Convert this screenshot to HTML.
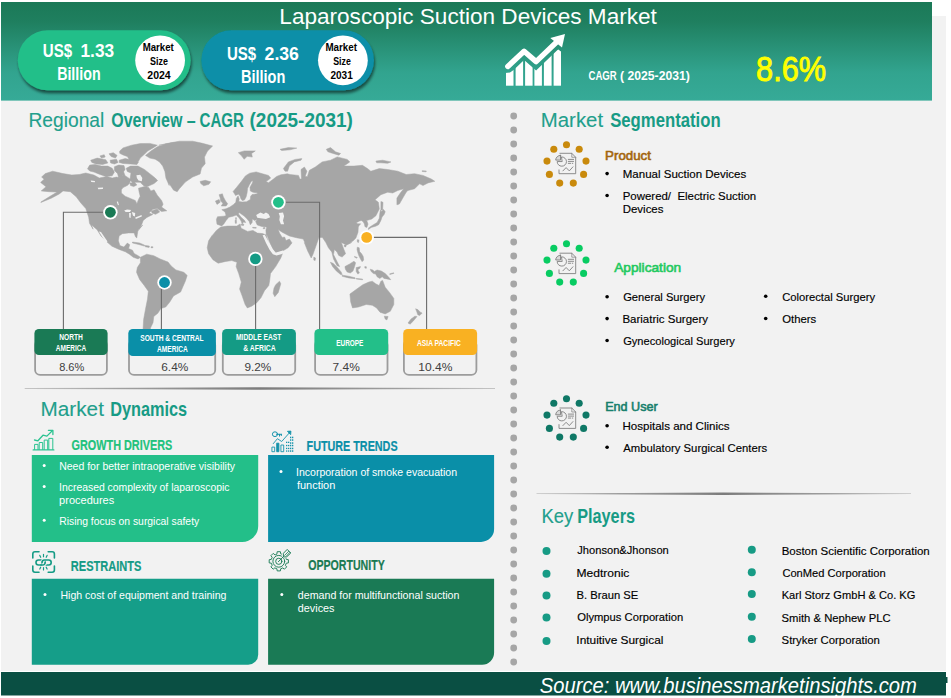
<!DOCTYPE html>
<html lang="en"><head><meta charset="utf-8"><title>Laparoscopic Suction Devices Market</title>
<style>html,body{margin:0;padding:0;background:#fff;overflow:hidden}svg{display:block}text{font-family:"Liberation Sans",Arial,sans-serif;white-space:pre}</style></head><body>
<svg width="951" height="698" viewBox="0 0 951 698">
<defs>
<linearGradient id="bn" x1="0" y1="0" x2="0" y2="1"><stop offset="0" stop-color="#1b7957"/><stop offset="0.2" stop-color="#1f7f5f"/><stop offset="0.72" stop-color="#32a48f"/><stop offset="1" stop-color="#36aa97"/></linearGradient>
<linearGradient id="dv" x1="0" y1="0" x2="1" y2="0"><stop offset="0" stop-color="#c4c4c4"/><stop offset="0.2" stop-color="#a0a0a0"/><stop offset="0.5" stop-color="#7c7c7c"/><stop offset="0.8" stop-color="#a0a0a0"/><stop offset="1" stop-color="#c4c4c4"/></linearGradient>
<filter id="sh" x="-10%" y="-20%" width="125%" height="150%"><feGaussianBlur in="SourceAlpha" stdDeviation="1.6"/><feOffset dx="1" dy="2.5"/><feComponentTransfer><feFuncA type="linear" slope="0.55"/></feComponentTransfer><feMerge><feMergeNode/><feMergeNode in="SourceGraphic"/></feMerge></filter>
</defs>
<rect x="0" y="0" width="951" height="698" fill="#fff"/>
<rect x="1" y="16" width="945" height="655" fill="#f2f2f2"/>
<rect x="1" y="2" width="931" height="98.6" fill="url(#bn)"/>
<rect x="1" y="672" width="945" height="23.5" fill="#0a4f43"/>
<rect x="945" y="677" width="2.5" height="6" fill="#0a4f43"/>
<text x="539.78" y="693" font-size="22" fill="#fff" font-style="italic" textLength="377.14" lengthAdjust="spacingAndGlyphs">Source: www.businessmarketinsights.com</text>
<text x="279.37" y="24" font-size="22" fill="#fff" textLength="377.44" lengthAdjust="spacingAndGlyphs">Laparoscopic Suction Devices Market</text>
<g filter="url(#sh)"><rect x="17.8" y="30.3" width="172.8" height="60" rx="30" fill="#23bf89"/></g>
<g filter="url(#sh)"><rect x="201.4" y="30.3" width="172.5" height="60" rx="30" fill="#0a8fa8"/></g>
<circle cx="160.1" cy="60.3" r="24.9" fill="#fff"/>
<circle cx="342.9" cy="60.3" r="24.9" fill="#fff"/>
<text x="42.76" y="56.6" font-size="18.6" fill="#fff" font-weight="bold" textLength="29.36" lengthAdjust="spacingAndGlyphs">US$</text>
<text x="80.50" y="56.6" font-size="18.6" fill="#fff" font-weight="bold" textLength="33.67" lengthAdjust="spacingAndGlyphs">1.33</text>
<text x="57.14" y="79.9" font-size="18.6" fill="#fff" font-weight="bold" textLength="43.52" lengthAdjust="spacingAndGlyphs">Billion</text>
<text x="226.96" y="60" font-size="18.6" fill="#fff" font-weight="bold" textLength="29.2" lengthAdjust="spacingAndGlyphs">US$</text>
<text x="264.58" y="60" font-size="18.6" fill="#fff" font-weight="bold" textLength="34.32" lengthAdjust="spacingAndGlyphs">2.36</text>
<text x="240.94" y="82.7" font-size="18.6" fill="#fff" font-weight="bold" textLength="44.42" lengthAdjust="spacingAndGlyphs">Billion</text>
<text x="142.69" y="50.9" font-size="11" fill="#000" font-weight="bold" textLength="31.15" lengthAdjust="spacingAndGlyphs">Market</text>
<text x="150.08" y="64.7" font-size="11" fill="#000" font-weight="bold" textLength="17.84" lengthAdjust="spacingAndGlyphs">Size</text>
<text x="147.30" y="78.6" font-size="11" fill="#000" font-weight="bold" textLength="23.42" lengthAdjust="spacingAndGlyphs">2024</text>
<text x="325.39" y="50.9" font-size="11" fill="#000" font-weight="bold" textLength="31.62" lengthAdjust="spacingAndGlyphs">Market</text>
<text x="333.18" y="64.7" font-size="11" fill="#000" font-weight="bold" textLength="17.6" lengthAdjust="spacingAndGlyphs">Size</text>
<text x="330.41" y="78.6" font-size="11" fill="#000" font-weight="bold" textLength="22.36" lengthAdjust="spacingAndGlyphs">2031</text>
<clipPath id="bc"><path d="M505 73L510 72.6L513.6 69.9L524.1 60.1L536.1 70.4L557.2 50.3L558.3 49.4L561.3 51.7V86H505Z"/></clipPath><g fill="#fff" clip-path="url(#bc)"><rect x="506" y="40" width="7.5" height="45.7"/><rect x="515.6" y="40" width="7.5" height="45.7"/><rect x="525.1" y="40" width="7.5" height="45.7"/><rect x="534.4" y="40" width="7.5" height="45.7"/><rect x="543.9" y="40" width="7.7" height="45.7"/><rect x="553.6" y="40" width="7.4" height="45.7"/></g><path d="M507.8 66.4L524.1 51.3L536.1 61.6L557.2 41.5" fill="none" stroke="#fff" stroke-width="5.4" stroke-linecap="round" stroke-linejoin="round"/><path d="M565 34L550.3 38L562 47.6Z" fill="#fff"/>
<text x="588.48" y="80" font-size="12.5" fill="#fff" font-weight="bold" textLength="28.22" lengthAdjust="spacingAndGlyphs">CAGR</text>
<text x="619.99" y="80" font-size="12.5" fill="#fff" font-weight="bold" textLength="69.92" lengthAdjust="spacingAndGlyphs">( 2025-2031)</text>
<text x="756.09" y="80.7" font-size="34.4" fill="#ffff00" stroke="#ffff00" stroke-width="0.9" textLength="70.03" lengthAdjust="spacingAndGlyphs">8.6%</text>
<text x="28.40" y="126.6" font-size="20.5" fill="#229f8c" stroke="#229f8c" stroke-width="0.12" textLength="75.95" lengthAdjust="spacingAndGlyphs">Regional</text>
<text x="111.19" y="126.6" font-size="20.5" fill="#179b85" font-weight="bold" textLength="84.49" lengthAdjust="spacingAndGlyphs">Overview –</text>
<text x="199.59" y="126.6" font-size="20.5" fill="#179b85" font-weight="bold" textLength="44.37" lengthAdjust="spacingAndGlyphs">CAGR</text>
<text x="249.54" y="126.6" font-size="20.5" fill="#179b85" font-weight="bold" textLength="103.42" lengthAdjust="spacingAndGlyphs">(2025-2031)</text>
<path d="M40.9 202.0 L49.7 196.5 L57.1 192.1 L49.0 191.7 L41.2 190.9 L46.0 186.8 L40.6 182.4 L44.1 179.2 L41.6 177.0 L45.3 173.6 L52.7 171.2 L63.0 173.6 L71.8 175.0 L79.2 174.5 L85.8 173.0 L93.9 175.0 L99.3 178.0 L106.9 176.4 L112.2 178.0 L116.5 177.1 L120.3 178.0 L122.4 175.3 L120.8 172.1 L123.5 171.5 L125.1 175.8 L127.8 177.4 L130.7 179.6 L129.6 183.3 L127.3 185.5 L123.0 187.6 L121.4 189.8 L121.4 193.0 L125.1 196.2 L131.6 198.9 L135.3 200.5 L136.9 203.7 L138.5 199.4 L140.2 196.2 L139.1 191.9 L138.5 188.2 L144.4 186.6 L148.7 187.6 L150.9 190.9 L154.1 189.8 L157.3 195.2 L161.6 200.5 L163.1 204.2 L161.6 207.1 L166.8 210.8 L161.6 211.5 L157.2 208.6 L152.8 209.3 L149.1 213.0 L152.8 214.5 L146.9 217.4 L143.2 220.4 L141.0 226.3 L138.0 230.7 L142.8 225.0 L138.1 229.7 L137.3 234.5 L136.8 237.9 L135.5 236.8 L134.1 232.9 L128.6 232.9 L122.3 233.7 L119.1 236.0 L118.4 240.8 L119.9 245.5 L123.9 247.1 L127.3 243.1 L129.7 244.7 L128.6 248.6 L132.5 250.2 L134.1 253.4 L138.1 255.7 L140.4 257.3 L138.1 258.9 L133.3 257.3 L129.4 254.2 L125.4 251.8 L119.1 249.4 L112.0 246.3 L106.5 241.6 L101.0 236.0 L97.1 229.7 L91.6 225.0 L93.1 229.2 L89.5 223.3 L88.7 217.4 L85.8 208.6 L80.6 202.7 L76.2 196.8 L70.3 191.7 L63.0 190.9 L59.3 193.9 L51.2 198.3 L40.9 202.4Z M119.7 151.1 L123.0 147.9 L131.6 145.2 L140.2 143.6 L149.8 143.4 L157.3 145.2 L153.0 147.9 L147.7 151.1 L144.4 154.3 L140.2 158.1 L138.5 161.3 L133.7 161.9 L129.4 159.7 L127.3 156.5 L123.0 154.9 L119.7 153.3Z M109.0 153.8 L113.3 152.7 L117.1 155.4 L115.4 158.1 L111.1 156.5Z M99.9 155.9 L104.2 154.7 L105.2 157.0 L101.5 158.1Z M90.7 160.2 L97.2 158.1 L105.8 159.7 L107.9 162.9 L102.6 164.5 L96.1 164.0 L91.8 162.4Z M87.5 168.8 L89.7 165.1 L95.0 164.5 L101.5 166.1 L107.9 166.1 L112.2 168.3 L114.4 172.1 L112.2 175.8 L105.8 176.4 L99.3 174.2 L94.0 172.1 L89.7 171.0Z M110.1 160.2 L116.5 159.2 L118.1 162.4 L114.4 164.0 L110.6 162.9Z M119.2 160.2 L125.1 158.6 L133.7 160.2 L138.5 161.9 L136.9 164.5 L130.5 164.0 L123.0 163.5 L119.2 162.4Z M114.4 166.7 L118.7 165.1 L124.0 165.6 L125.1 169.4 L123.0 172.6 L121.4 177.4 L118.7 178.0 L117.6 173.7 L114.4 170.4Z M126.2 168.3 L130.5 166.1 L138.0 166.1 L144.4 169.4 L149.8 173.7 L155.2 178.0 L157.6 180.6 L154.1 183.5 L149.8 185.5 L146.6 187.1 L143.4 185.5 L140.2 182.3 L135.9 182.3 L132.6 182.8 L129.9 180.1 L130.5 175.8 L131.0 173.1 L127.3 171.5Z M129.9 183.0 L134.8 182.5 L136.9 184.9 L133.7 186.6 L130.5 185.5Z M145.5 155.4 L150.9 151.1 L157.3 146.8 L165.9 144.1 L174.5 142.5 L158.8 145.3 L169.1 143.1 L179.4 141.2 L192.7 141.2 L201.5 143.1 L212.6 146.0 L207.4 151.2 L204.5 157.1 L205.2 163.7 L201.5 168.1 L200.1 174.0 L192.7 177.0 L185.3 182.1 L179.4 188.7 L177.2 191.7 L173.6 190.2 L169.1 183.6 L169.2 185.5 L165.9 178.0 L164.9 171.5 L162.7 166.1 L159.5 161.9 L155.2 159.2 L149.8 158.1Z M200.1 181.4 L205.2 180.3 L210.7 181.8 L208.9 184.3 L203.7 185.8 L200.8 183.6Z M238.3 152.7 L244.2 150.9 L255.3 150.9 L251.6 153.4 L252.3 157.1 L247.2 156.3 L244.2 159.3 L241.3 155.6Z M132.5 242.0 L139.6 243.0 L144.7 245.2 L144.4 246.1 L138.8 244.5 L132.5 243.0Z M145.2 245.5 L149.4 246.1 L149.1 247.4 L145.2 246.8Z M151.0 246.8 L152.9 246.8 L152.9 247.7 L151.0 247.7Z M140.4 257.3 L146.7 254.2 L153.8 255.7 L160.1 258.9 L168.0 262.0 L171.2 266.0 L175.9 269.9 L183.8 272.3 L187.2 275.4 L185.4 281.0 L183.0 286.5 L180.6 292.0 L173.5 295.9 L169.6 302.3 L165.7 307.0 L160.9 308.6 L157.8 313.3 L153.8 316.4 L153.0 322.7 L150.7 327.5 L149.1 333.8 L142.8 333.8 L143.6 319.6 L145.9 307.0 L147.5 299.1 L148.3 291.2 L144.4 285.7 L139.6 279.4 L136.5 272.3 L137.3 267.6 L140.4 262.8Z M212.1 235.7 L216.4 230.4 L220.7 227.1 L227.2 226.1 L236.9 226.1 L240.1 223.9 L241.1 228.2 L247.6 231.4 L253.0 230.4 L257.3 233.1 L262.6 233.6 L266.2 235.0 L268.8 244.2 L273.1 252.0 L275.7 254.6 L282.6 253.2 L280.8 258.0 L275.7 266.6 L270.5 273.5 L269.7 280.4 L268.8 285.5 L264.5 290.7 L261.1 297.6 L256.8 302.7 L251.6 306.2 L247.3 307.9 L245.1 304.4 L242.1 295.8 L239.6 289.0 L241.3 282.1 L238.7 273.5 L236.1 266.6 L237.0 262.3 L231.8 260.6 L225.8 261.4 L218.1 263.2 L212.9 259.7 L208.6 253.7 L207.2 247.7 L208.6 240.8 L212.0 235.6Z M275.7 284.7 L279.5 281.2 L280.8 283.8 L278.3 292.4 L274.8 296.7 L273.1 293.3 L274.0 288.1Z M233.1 191.5 L236.3 187.7 L241.1 181.8 L245.4 175.9 L249.7 173.2 L256.2 171.9 L262.6 173.8 L268.5 175.4 L270.7 178.1 L268.0 180.2 L265.9 181.3 L268.5 182.7 L273.4 179.1 L276.6 176.4 L280.9 174.8 L287.3 173.8 L290.1 174.5 L298.5 175.4 L299.9 179.1 L301.5 179.1 L301.0 169.5 L304.4 167.0 L306.9 171.2 L305.2 176.2 L307.3 176.7 L309.4 170.3 L315.3 167.0 L322.1 161.9 L330.5 160.2 L337.2 156.9 L347.3 159.4 L349.8 161.9 L343.9 166.1 L354.0 166.1 L362.4 165.3 L367.5 168.6 L370.8 171.2 L379.3 168.6 L387.7 169.5 L397.8 171.2 L406.2 174.5 L414.6 173.7 L423.0 175.4 L431.4 179.1 L434.8 181.3 L428.0 182.9 L423.0 185.5 L419.6 183.8 L414.6 188.8 L407.9 190.5 L406.2 192.2 L402.8 198.1 L399.4 204.0 L396.9 204.8 L396.9 198.1 L400.3 193.0 L403.7 188.8 L397.8 190.5 L392.7 193.0 L387.7 192.2 L380.9 194.7 L375.1 199.8 L378.4 202.3 L379.3 209.0 L375.9 215.8 L371.7 219.1 L365.8 220.8 L366.9 220.9 L368.0 224.1 L366.9 227.4 L365.0 226.8 L364.4 224.1 L363.2 221.7 L361.3 220.4 L359.6 221.0 L358.1 221.7 L356.4 222.7 L357.5 223.8 L360.7 223.8 L359.0 225.7 L358.3 227.0 L358.0 232.2 L355.9 238.1 L353.2 240.8 L348.9 243.5 L345.4 244.8 L351.6 242.5 L346.4 245.1 L341.3 242.5 L343.9 249.4 L345.6 253.7 L342.1 257.1 L338.7 255.4 L337.0 252.0 L334.4 249.4 L333.5 254.6 L337.0 261.4 L339.6 266.6 L337.0 265.7 L333.5 258.9 L331.8 252.0 L328.4 247.7 L325.8 242.5 L322.4 237.4 L318.9 237.4 L316.3 245.1 L312.9 254.6 L311.2 258.0 L307.7 251.1 L304.3 242.5 L305.3 243.4 L303.2 239.1 L296.3 237.7 L289.4 236.0 L286.0 234.3 L281.7 231.9 L278.3 229.6 L279.5 233.1 L282.2 237.4 L284.6 237.0 L286.0 240.5 L289.4 239.1 L292.0 242.9 L288.1 247.7 L282.6 251.1 L276.5 253.2 L273.1 249.4 L269.7 242.5 L267.1 235.6 L266.2 234.8 L265.9 230.2 L266.7 226.9 L261.6 226.4 L257.3 225.0 L255.6 221.6 L257.3 219.6 L254.6 220.5 L252.4 218.9 L252.1 222.6 L250.3 224.8 L249.2 221.6 L247.1 218.9 L244.4 216.2 L240.6 213.5 L239.0 212.4 L238.5 214.0 L241.1 217.3 L244.4 220.3 L245.7 222.6 L243.5 222.1 L242.2 223.9 L241.1 221.0 L239.0 217.8 L236.3 215.1 L233.1 216.2 L228.8 217.3 L226.1 220.5 L224.0 223.7 L221.8 225.9 L217.0 224.2 L216.4 219.4 L217.5 216.7 L224.0 216.2 L226.1 215.6 L225.0 211.9 L221.8 209.7 L226.1 208.7 L229.9 207.1 L233.6 204.4 L235.8 202.2 L236.3 198.5 L238.1 195.8 L239.2 199.0 L238.8 201.4 L242.2 202.0 L246.5 201.7 L250.3 199.5 L250.6 196.3 L252.1 194.5 L257.3 193.8 L257.3 192.8 L253.0 192.3 L250.3 190.9 L250.0 187.2 L252.4 182.9 L253.0 180.7 L251.4 181.3 L249.5 184.5 L247.6 188.3 L247.1 192.8 L246.1 196.9 L244.4 200.1 L242.2 200.6 L240.9 198.8 L240.1 196.3 L238.8 194.2 L237.1 194.7 L235.6 195.6Z M219.1 194.7 L222.4 193.8 L223.4 196.9 L225.6 201.1 L227.7 203.8 L226.1 206.0 L221.3 206.0 L222.9 203.3 L220.7 201.1 L220.2 197.9Z M215.4 201.1 L219.1 199.5 L220.2 202.2 L217.0 204.4Z M240.9 224.2 L243.8 224.0 L243.5 225.6 L241.4 225.3Z M235.1 220.3 L236.4 220.3 L236.4 223.3 L235.3 223.3Z M235.6 217.7 L236.4 217.7 L236.3 219.6 L235.7 219.6Z M252.7 227.3 L256.2 227.5 L256.2 228.2 L252.7 228.0Z M263.1 227.8 L265.0 227.6 L265.0 228.6 L263.3 228.8Z M283.4 168.6 L288.4 161.9 L295.1 159.4 L301.9 158.6 L301.0 160.2 L294.3 161.9 L289.3 166.1 L287.6 171.2 L285.0 171.2Z M326.3 149.3 L330.5 147.6 L335.5 151.8 L340.6 153.5 L338.9 155.2 L332.2 153.2 L327.9 151.8Z M375.9 161.1 L382.6 160.2 L391.0 161.9 L387.7 163.3 L380.9 162.8 L376.7 162.8Z M422.2 170.7 L426.4 171.0 L426.0 171.8 L422.2 171.5Z M280.0 149.3 L288.4 147.6 L296.8 148.1 L290.1 149.8 L281.7 150.5Z M380.9 201.5 L383.0 202.3 L382.6 210.7 L380.9 211.5Z M368.5 229.5 L371.2 227.4 L375.5 226.3 L378.7 224.7 L380.9 220.4 L382.0 217.1 L384.1 214.5 L385.2 211.8 L383.6 209.6 L380.4 210.2 L379.8 213.4 L379.3 218.2 L377.1 222.5 L373.4 224.7 L370.2 226.8 L368.5 227.9Z M357.3 239.7 L358.9 239.9 L358.5 242.5 L357.4 242.1Z M344.2 245.1 L346.2 245.0 L345.8 246.9 L344.4 246.7Z M313.8 257.1 L315.5 258.0 L315.1 260.6 L313.8 260.1Z M357.3 247.2 L359.2 247.8 L359.6 251.5 L361.6 253.7 L363.2 256.4 L363.7 260.1 L362.1 261.7 L360.5 259.0 L358.9 255.8 L357.8 252.6 L357.0 249.4Z M354.6 256.4 L357.3 257.5 L356.8 258.2 L354.4 257.1Z M344.9 266.6 L349.7 263.9 L354.0 261.2 L355.6 262.8 L354.6 266.6 L353.0 270.9 L350.3 273.0 L347.1 271.9 L345.4 269.2Z M330.4 262.3 L333.1 263.3 L337.4 267.6 L341.1 271.9 L342.2 274.6 L340.6 274.6 L336.3 270.9 L332.6 266.6Z M342.2 275.2 L348.7 276.2 L355.1 277.8 L355.1 278.7 L348.7 277.9 L342.2 276.3Z M356.2 278.4 L362.6 279.1 L362.6 279.8 L356.2 279.1Z M356.2 267.6 L360.5 266.6 L359.9 268.2 L357.8 269.8 L359.4 273.0 L357.8 274.1 L356.2 271.4Z M364.8 266.6 L366.4 266.8 L366.3 268.3 L364.9 268.1Z M370.2 269.2 L372.8 270.0 L374.4 271.4 L377.1 270.0 L381.4 271.1 L385.2 273.5 L387.9 276.2 L390.8 279.7 L386.8 278.9 L384.1 278.4 L382.2 276.8 L379.8 278.4 L377.1 276.8 L375.7 274.1 L373.4 273.5 L371.2 271.6Z M389.5 273.9 L393.6 272.8 L393.8 273.4 L389.9 274.4Z M349.9 294.1 L356.8 289.0 L362.8 284.7 L368.8 282.1 L372.3 281.2 L375.7 283.8 L379.1 285.5 L380.9 281.2 L382.6 280.4 L385.2 287.3 L389.5 292.4 L393.8 298.4 L393.8 304.5 L390.3 311.3 L385.2 313.9 L380.0 312.2 L376.6 307.9 L372.3 305.3 L366.2 304.5 L358.5 307.0 L352.5 307.9 L350.7 301.9Z M384.3 316.2 L388.1 316.5 L386.9 319.9 L385.2 319.1Z M415.6 308.8 L417.8 309.6 L420.4 312.2 L422.1 313.1 L419.6 315.6 L417.8 314.8 L416.6 311.3Z M417.0 316.5 L413.5 320.8 L410.1 324.2 L408.0 323.0 L411.0 319.1 L414.9 316.2Z M151.3 210.9 L157.2 209.1 L159.7 212.0 L155.6 214.3 L152.2 213.2Z" fill="#a6a6a6" stroke="#a6a6a6" stroke-width="0.5" stroke-linejoin="round"/>
<path d="M136.4 175.3 L140.2 174.7 L142.3 178.0 L141.8 181.2 L138.5 180.6 L136.9 178.0Z M90.7 180.6 L95.0 181.0 L94.8 182.3 L91.3 182.0Z M97.7 187.8 L103.1 187.4 L102.9 188.9 L98.3 189.2Z M256.2 215.1 L260.5 212.4 L263.7 214.0 L265.9 212.4 L268.5 214.0 L270.2 217.3 L265.9 218.9 L260.5 218.3 L257.3 217.8Z M278.7 213.0 L283.0 212.4 L284.1 216.2 L283.0 220.5 L284.1 224.2 L280.9 224.2 L279.3 219.9 L279.8 216.2Z M124.2 210.6 L127.1 209.5 L131.1 210.0 L130.0 212.1 L125.7 212.1Z M129.1 213.0 L130.9 213.0 L130.6 218.1 L129.3 217.5Z M131.8 212.0 L135.2 213.0 L134.9 216.4 L133.0 215.8Z M135.2 217.5 L141.6 215.1 L141.8 216.4 L135.8 218.9Z M98.9 231.4 L101.0 232.1 L107.5 241.6 L105.8 242.6 L102.4 237.3Z M116.7 201.8 L118.0 201.6 L118.9 205.0 L118.0 205.3Z M262.6 235.3 L264.8 234.8 L268.7 242.1 L272.1 248.2 L275.3 252.8 L282.8 250.6 L285.3 251.8 L282.1 254.0 L276.5 255.4 L272.9 254.3 L269.7 249.9 L266.0 243.1Z" fill="#f2f2f2"/>
<path d="M110.4 212.3H63.4V330 M161.4 282V330 M255.6 259V330 M278 202.3H319.6V330 M366.7 237.4H426.6V330" fill="none" stroke="#6b6b6b" stroke-width="1.1"/>
<circle cx="110.4" cy="212.3" r="7.2" fill="#fff"/><circle cx="110.4" cy="212.3" r="5.4" fill="#1a7a55"/>
<circle cx="164.5" cy="282.5" r="7.2" fill="#fff"/><circle cx="164.5" cy="282.5" r="5.4" fill="#0a8fa8"/>
<circle cx="255.4" cy="258.9" r="7.2" fill="#fff"/><circle cx="255.4" cy="258.9" r="5.4" fill="#149b85"/>
<circle cx="278.4" cy="202.3" r="7.2" fill="#fff"/><circle cx="278.4" cy="202.3" r="5.4" fill="#23bf89"/>
<circle cx="366.7" cy="237.4" r="7.2" fill="#fff"/><circle cx="366.7" cy="237.4" r="5.4" fill="#f9b122"/>
<rect x="35.1" y="340" width="71.8" height="34.9" rx="5" fill="#f2f2f2" stroke="#9c9c9c" stroke-width="1.8"/>
<rect x="34.4" y="329" width="73.2" height="26" rx="4.5" fill="#1a7a55"/>
<text x="59.13" y="371" font-size="11.6" fill="#404040" textLength="25.17" lengthAdjust="spacingAndGlyphs">8.6%</text>
<rect x="129.0" y="340" width="86.2" height="34.9" rx="5" fill="#f2f2f2" stroke="#9c9c9c" stroke-width="1.8"/>
<rect x="128.3" y="329" width="87.6" height="27" rx="4.5" fill="#0a8fa8"/>
<text x="161.25" y="371" font-size="11.6" fill="#404040" textLength="27.03" lengthAdjust="spacingAndGlyphs">6.4%</text>
<rect x="222.8" y="340" width="72.4" height="34.9" rx="5" fill="#f2f2f2" stroke="#9c9c9c" stroke-width="1.8"/>
<rect x="222.1" y="329" width="73.8" height="26" rx="4.5" fill="#149b85"/>
<text x="244.48" y="371" font-size="11.6" fill="#404040" textLength="26.88" lengthAdjust="spacingAndGlyphs">9.2%</text>
<rect x="315.1" y="340" width="72.4" height="34.9" rx="5" fill="#f2f2f2" stroke="#9c9c9c" stroke-width="1.8"/>
<rect x="314.4" y="329" width="73.8" height="26" rx="4.5" fill="#23bf89"/>
<text x="332.58" y="371" font-size="11.6" fill="#404040" textLength="27.25" lengthAdjust="spacingAndGlyphs">7.4%</text>
<rect x="403.9" y="340" width="72.5" height="34.9" rx="5" fill="#f2f2f2" stroke="#9c9c9c" stroke-width="1.8"/>
<rect x="403.2" y="329" width="73.9" height="26" rx="4.5" fill="#f9b122"/>
<text x="418.24" y="371" font-size="11.6" fill="#404040" textLength="34.16" lengthAdjust="spacingAndGlyphs">10.4%</text>
<text x="59.15" y="340.4" font-size="8.8" fill="#fff" font-weight="bold" textLength="23.68" lengthAdjust="spacingAndGlyphs">NORTH</text>
<text x="55.79" y="351.4" font-size="8.8" fill="#fff" font-weight="bold" textLength="30.41" lengthAdjust="spacingAndGlyphs">AMERICA</text>
<text x="140.25" y="341.4" font-size="8.8" fill="#fff" font-weight="bold" textLength="63.41" lengthAdjust="spacingAndGlyphs">SOUTH &amp; CENTRAL</text>
<text x="157.09" y="352.4" font-size="8.8" fill="#fff" font-weight="bold" textLength="30.76" lengthAdjust="spacingAndGlyphs">AMERICA</text>
<text x="236.05" y="340" font-size="8.8" fill="#fff" font-weight="bold" textLength="45.3" lengthAdjust="spacingAndGlyphs">MIDDLE EAST</text>
<text x="243.18" y="351.1" font-size="8.8" fill="#fff" font-weight="bold" textLength="32.56" lengthAdjust="spacingAndGlyphs">&amp; AFRICA</text>
<text x="336.27" y="346.3" font-size="8.8" fill="#fff" font-weight="bold" textLength="27.11" lengthAdjust="spacingAndGlyphs">EUROPE</text>
<text x="416.99" y="346.3" font-size="8.8" fill="#fff" font-weight="bold" textLength="43.83" lengthAdjust="spacingAndGlyphs">ASIA PACIFIC</text>
<path d="M24.7 388.1L140 387.7L260 387.3L380 387.7L495 388.1V388.9L380 389.3L260 389.7L140 389.3L24.7 388.9Z" fill="url(#dv)"/>
<circle cx="513.7" cy="116.0" r="3.4" fill="#a6a6a6"/>
<circle cx="513.7" cy="130.0" r="3.4" fill="#a6a6a6"/>
<circle cx="513.7" cy="144.0" r="3.4" fill="#a6a6a6"/>
<circle cx="513.7" cy="158.0" r="3.4" fill="#a6a6a6"/>
<circle cx="513.7" cy="172.0" r="3.4" fill="#a6a6a6"/>
<circle cx="513.7" cy="186.0" r="3.4" fill="#a6a6a6"/>
<circle cx="513.7" cy="200.0" r="3.4" fill="#a6a6a6"/>
<circle cx="513.7" cy="214.0" r="3.4" fill="#a6a6a6"/>
<circle cx="513.7" cy="228.0" r="3.4" fill="#a6a6a6"/>
<circle cx="513.7" cy="242.0" r="3.4" fill="#a6a6a6"/>
<circle cx="513.7" cy="256.0" r="3.4" fill="#a6a6a6"/>
<circle cx="513.7" cy="270.0" r="3.4" fill="#a6a6a6"/>
<circle cx="513.7" cy="284.0" r="3.4" fill="#a6a6a6"/>
<circle cx="513.7" cy="298.0" r="3.4" fill="#a6a6a6"/>
<circle cx="513.7" cy="312.0" r="3.4" fill="#a6a6a6"/>
<circle cx="513.7" cy="326.0" r="3.4" fill="#a6a6a6"/>
<circle cx="513.7" cy="340.0" r="3.4" fill="#a6a6a6"/>
<circle cx="513.7" cy="354.0" r="3.4" fill="#a6a6a6"/>
<circle cx="513.7" cy="368.0" r="3.4" fill="#a6a6a6"/>
<circle cx="513.7" cy="382.0" r="3.4" fill="#a6a6a6"/>
<circle cx="513.7" cy="396.0" r="3.4" fill="#a6a6a6"/>
<circle cx="513.7" cy="410.0" r="3.4" fill="#a6a6a6"/>
<circle cx="513.7" cy="424.0" r="3.4" fill="#a6a6a6"/>
<circle cx="513.7" cy="438.0" r="3.4" fill="#a6a6a6"/>
<circle cx="513.7" cy="452.0" r="3.4" fill="#a6a6a6"/>
<circle cx="513.7" cy="466.0" r="3.4" fill="#a6a6a6"/>
<circle cx="513.7" cy="480.0" r="3.4" fill="#a6a6a6"/>
<circle cx="513.7" cy="494.0" r="3.4" fill="#a6a6a6"/>
<circle cx="513.7" cy="508.0" r="3.4" fill="#a6a6a6"/>
<circle cx="513.7" cy="522.0" r="3.4" fill="#a6a6a6"/>
<circle cx="513.7" cy="536.0" r="3.4" fill="#a6a6a6"/>
<circle cx="513.7" cy="550.0" r="3.4" fill="#a6a6a6"/>
<circle cx="513.7" cy="564.0" r="3.4" fill="#a6a6a6"/>
<circle cx="513.7" cy="578.0" r="3.4" fill="#a6a6a6"/>
<circle cx="513.7" cy="592.0" r="3.4" fill="#a6a6a6"/>
<circle cx="513.7" cy="606.0" r="3.4" fill="#a6a6a6"/>
<circle cx="513.7" cy="620.0" r="3.4" fill="#a6a6a6"/>
<circle cx="513.7" cy="634.0" r="3.4" fill="#a6a6a6"/>
<circle cx="513.7" cy="648.0" r="3.4" fill="#a6a6a6"/>
<circle cx="513.7" cy="662.0" r="3.4" fill="#a6a6a6"/>
<text x="540.79" y="126.6" font-size="20.5" fill="#229f8c" stroke="#229f8c" stroke-width="0.12" textLength="62.31" lengthAdjust="spacingAndGlyphs">Market</text>
<text x="610.18" y="126.6" font-size="20.5" fill="#179b85" font-weight="bold" textLength="110.45" lengthAdjust="spacingAndGlyphs">Segmentation</text>
<circle cx="566.5" cy="144.7" r="3.55" fill="#c98a0c"/>
<circle cx="579.2" cy="149.3" r="3.55" fill="#c98a0c"/>
<circle cx="586.0" cy="161.1" r="3.55" fill="#c98a0c"/>
<circle cx="583.6" cy="174.4" r="3.55" fill="#c98a0c"/>
<circle cx="573.3" cy="183.1" r="3.55" fill="#c98a0c"/>
<circle cx="559.7" cy="183.1" r="3.55" fill="#c98a0c"/>
<circle cx="549.4" cy="174.4" r="3.55" fill="#c98a0c"/>
<circle cx="547.0" cy="161.1" r="3.55" fill="#c98a0c"/>
<circle cx="553.8" cy="149.3" r="3.55" fill="#c98a0c"/>
<g transform="translate(566.5,164.5)" fill="none" stroke="#808080" stroke-width="0.9" stroke-linecap="round" stroke-linejoin="round"><path d="M-6.6 -11.2H5.3L9.2 -7.2V9.2H-7.5V5.4"/><path d="M5.3 -11.2V-7.2H9.2" stroke-width="0.7"/><path d="M-4.7 -7.6A4.65 4.65 0 1 1 -9.35 -2.95H-4.7Z"/><path d="M-6 -9.2V-4.4H-10.8A4.8 4.8 0 0 1 -6 -9.2Z" fill="#d9d9d9"/><path d="M1.8 -5.1H7.1M1.8 -3.1H7.1M1.8 -1.15H4.2M5.8 -1.15H6.3"/><path d="M-3.6 6.4L-0.4 3.1L2.8 6.4L6.4 2.4"/></g>
<circle cx="566.5" cy="243.7" r="3.55" fill="#08cc62"/>
<circle cx="579.2" cy="248.3" r="3.55" fill="#08cc62"/>
<circle cx="586.0" cy="260.1" r="3.55" fill="#08cc62"/>
<circle cx="583.6" cy="273.4" r="3.55" fill="#08cc62"/>
<circle cx="573.3" cy="282.1" r="3.55" fill="#08cc62"/>
<circle cx="559.7" cy="282.1" r="3.55" fill="#08cc62"/>
<circle cx="549.4" cy="273.4" r="3.55" fill="#08cc62"/>
<circle cx="547.0" cy="260.1" r="3.55" fill="#08cc62"/>
<circle cx="553.8" cy="248.3" r="3.55" fill="#08cc62"/>
<g transform="translate(566.5,264.4)" fill="none" stroke="#808080" stroke-width="0.9" stroke-linecap="round" stroke-linejoin="round"><path d="M-6.6 -11.2H5.3L9.2 -7.2V9.2H-7.5V5.4"/><path d="M5.3 -11.2V-7.2H9.2" stroke-width="0.7"/><path d="M-4.7 -7.6A4.65 4.65 0 1 1 -9.35 -2.95H-4.7Z"/><path d="M-6 -9.2V-4.4H-10.8A4.8 4.8 0 0 1 -6 -9.2Z" fill="#d9d9d9"/><path d="M1.8 -5.1H7.1M1.8 -3.1H7.1M1.8 -1.15H4.2M5.8 -1.15H6.3"/><path d="M-3.6 6.4L-0.4 3.1L2.8 6.4L6.4 2.4"/></g>
<circle cx="566.5" cy="398.7" r="3.55" fill="#0f7866"/>
<circle cx="579.2" cy="403.3" r="3.55" fill="#0f7866"/>
<circle cx="586.0" cy="415.1" r="3.55" fill="#0f7866"/>
<circle cx="583.6" cy="428.4" r="3.55" fill="#0f7866"/>
<circle cx="573.3" cy="437.1" r="3.55" fill="#0f7866"/>
<circle cx="559.7" cy="437.1" r="3.55" fill="#0f7866"/>
<circle cx="549.4" cy="428.4" r="3.55" fill="#0f7866"/>
<circle cx="547.0" cy="415.1" r="3.55" fill="#0f7866"/>
<circle cx="553.8" cy="403.3" r="3.55" fill="#0f7866"/>
<g transform="translate(566.5,419.2)" fill="none" stroke="#808080" stroke-width="0.9" stroke-linecap="round" stroke-linejoin="round"><path d="M-6.6 -11.2H5.3L9.2 -7.2V9.2H-7.5V5.4"/><path d="M5.3 -11.2V-7.2H9.2" stroke-width="0.7"/><path d="M-4.7 -7.6A4.65 4.65 0 1 1 -9.35 -2.95H-4.7Z"/><path d="M-6 -9.2V-4.4H-10.8A4.8 4.8 0 0 1 -6 -9.2Z" fill="#d9d9d9"/><path d="M1.8 -5.1H7.1M1.8 -3.1H7.1M1.8 -1.15H4.2M5.8 -1.15H6.3"/><path d="M-3.6 6.4L-0.4 3.1L2.8 6.4L6.4 2.4"/></g>
<text x="605.10" y="160.1" font-size="13.3" fill="#a3650c" stroke="#a3650c" stroke-width="0.6" textLength="45.84" lengthAdjust="spacingAndGlyphs">Product</text>
<text x="614.24" y="271.8" font-size="13.3" fill="#1fc95f" stroke="#1fc95f" stroke-width="0.6" textLength="66.96" lengthAdjust="spacingAndGlyphs">Application</text>
<text x="605.22" y="410.9" font-size="13.3" fill="#17806c" stroke="#17806c" stroke-width="0.6" textLength="52.49" lengthAdjust="spacingAndGlyphs">End User</text>
<text x="622.75" y="177.9" font-size="11.5" fill="#000" stroke="#000" stroke-width="0.15" textLength="123.49" lengthAdjust="spacingAndGlyphs">Manual Suction Devices</text>
<text x="622.75" y="199.8" font-size="11.5" fill="#000" stroke="#000" stroke-width="0.15" textLength="133.39" lengthAdjust="spacingAndGlyphs">Powered/  Electric Suction</text>
<text x="622.74" y="213.4" font-size="11.5" fill="#000" stroke="#000" stroke-width="0.15" textLength="40.71" lengthAdjust="spacingAndGlyphs">Devices</text>
<text x="623.18" y="301.1" font-size="11.5" fill="#000" stroke="#000" stroke-width="0.15" textLength="81.79" lengthAdjust="spacingAndGlyphs">General Surgery</text>
<text x="622.45" y="322.9" font-size="11.5" fill="#000" stroke="#000" stroke-width="0.15" textLength="85.58" lengthAdjust="spacingAndGlyphs">Bariatric Surgery</text>
<text x="623.19" y="344.8" font-size="11.5" fill="#000" stroke="#000" stroke-width="0.15" textLength="111.7" lengthAdjust="spacingAndGlyphs">Gynecological Surgery</text>
<text x="782.18" y="300.6" font-size="11.5" fill="#000" stroke="#000" stroke-width="0.15" textLength="92.97" lengthAdjust="spacingAndGlyphs">Colorectal Surgery</text>
<text x="782.20" y="322.8" font-size="11.5" fill="#000" stroke="#000" stroke-width="0.15" textLength="33.98" lengthAdjust="spacingAndGlyphs">Others</text>
<text x="622.45" y="430" font-size="11.5" fill="#000" stroke="#000" stroke-width="0.15" textLength="107.17" lengthAdjust="spacingAndGlyphs">Hospitals and Clinics</text>
<text x="623.34" y="451.6" font-size="11.5" fill="#000" stroke="#000" stroke-width="0.15" textLength="143.76" lengthAdjust="spacingAndGlyphs">Ambulatory Surgical Centers</text>
<circle cx="607.1" cy="173.6" r="1.8" fill="#000"/>
<circle cx="607.1" cy="195.5" r="1.8" fill="#000"/>
<circle cx="607.1" cy="296.8" r="1.8" fill="#000"/>
<circle cx="607.1" cy="318.59999999999997" r="1.8" fill="#000"/>
<circle cx="607.1" cy="340.5" r="1.8" fill="#000"/>
<circle cx="765.7" cy="296.3" r="1.8" fill="#000"/>
<circle cx="765.7" cy="318.5" r="1.8" fill="#000"/>
<circle cx="607.1" cy="425.7" r="1.8" fill="#000"/>
<circle cx="607.1" cy="447.3" r="1.8" fill="#000"/>
<path d="M536.5 493.3L630 492.9L723 492.5L817 492.9L911 493.3V494.1L817 494.5L723 494.9L630 494.5L536.5 494.1Z" fill="url(#dv)"/>
<text x="541.41" y="522.6" font-size="20.5" fill="#229f8c" stroke="#229f8c" stroke-width="0.12" textLength="31.92" lengthAdjust="spacingAndGlyphs">Key</text>
<text x="577.20" y="522.6" font-size="20.5" fill="#179b85" font-weight="bold" textLength="57.8" lengthAdjust="spacingAndGlyphs">Players</text>
<text x="577.31" y="553.9" font-size="11.5" fill="#000" stroke="#000" stroke-width="0.15" textLength="91.49" lengthAdjust="spacingAndGlyphs">Jhonson&amp;Jhonson</text>
<circle cx="546.5" cy="550.9" r="4" fill="#179b85"/>
<text x="576.44" y="576.7" font-size="11.5" fill="#000" stroke="#000" stroke-width="0.15" textLength="52.92" lengthAdjust="spacingAndGlyphs">Medtronic</text>
<circle cx="546.5" cy="573.7" r="4" fill="#179b85"/>
<text x="576.45" y="598.8" font-size="11.5" fill="#000" stroke="#000" stroke-width="0.15" textLength="61.79" lengthAdjust="spacingAndGlyphs">B. Braun SE</text>
<circle cx="546.5" cy="595.5" r="4" fill="#179b85"/>
<text x="577.20" y="620.6" font-size="11.5" fill="#000" stroke="#000" stroke-width="0.15" textLength="106.0" lengthAdjust="spacingAndGlyphs">Olympus Corporation</text>
<circle cx="546.5" cy="617.6" r="4" fill="#179b85"/>
<text x="576.37" y="643.9" font-size="11.5" fill="#000" stroke="#000" stroke-width="0.15" textLength="87.03" lengthAdjust="spacingAndGlyphs">Intuitive Surgical</text>
<circle cx="546.5" cy="640.9" r="4" fill="#179b85"/>
<text x="781.65" y="555.2" font-size="11.5" fill="#000" stroke="#000" stroke-width="0.15" textLength="148.11" lengthAdjust="spacingAndGlyphs">Boston Scientific Corporation</text>
<circle cx="751.8" cy="549.7" r="4" fill="#179b85"/>
<text x="782.39" y="577.1" font-size="11.5" fill="#000" stroke="#000" stroke-width="0.15" textLength="103.33" lengthAdjust="spacingAndGlyphs">ConMed Corporation</text>
<circle cx="751.8" cy="572.2" r="4" fill="#179b85"/>
<text x="781.64" y="599.1" font-size="11.5" fill="#000" stroke="#000" stroke-width="0.15" textLength="133.69" lengthAdjust="spacingAndGlyphs">Karl Storz GmbH &amp; Co. KG</text>
<circle cx="751.8" cy="593.9" r="4" fill="#179b85"/>
<text x="781.60" y="622" font-size="11.5" fill="#000" stroke="#000" stroke-width="0.15" textLength="108.95" lengthAdjust="spacingAndGlyphs">Smith &amp; Nephew PLC</text>
<circle cx="751.8" cy="616.8" r="4" fill="#179b85"/>
<text x="781.60" y="644.2" font-size="11.5" fill="#000" stroke="#000" stroke-width="0.15" textLength="98.19" lengthAdjust="spacingAndGlyphs">Stryker Corporation</text>
<circle cx="751.8" cy="639" r="4" fill="#179b85"/>
<text x="40.59" y="416" font-size="20.5" fill="#229f8c" stroke="#229f8c" stroke-width="0.12" textLength="63.33" lengthAdjust="spacingAndGlyphs">Market</text>
<text x="110.30" y="416" font-size="20.5" fill="#179b85" font-weight="bold" textLength="76.87" lengthAdjust="spacingAndGlyphs">Dynamics</text>
<path d="M31.8 455H258.2V525.9A16 16 0 0 1 242.2 541.9H31.8Z" fill="#23bf89"/>
<path d="M268.1 455H494.1V528.9A13 13 0 0 1 481.1 541.9H268.1Z" fill="#0a8fa8"/>
<path d="M31.8 578.8H258.2V654.8A10 10 0 0 1 248.2 664.8H31.8Z" fill="#159e89"/>
<path d="M268.1 578.8H494.1V652.8A12 12 0 0 1 482.1 664.8H268.1Z" fill="#1a7a55"/>
<text x="71.55" y="449.9" font-size="13.8" fill="#21c27c" font-weight="bold" stroke="#21c27c" stroke-width="0.2" textLength="100.75" lengthAdjust="spacingAndGlyphs">GROWTH DRIVERS</text>
<text x="306.59" y="451" font-size="13.8" fill="#0a8fa8" font-weight="bold" stroke="#0a8fa8" stroke-width="0.2" textLength="91.01" lengthAdjust="spacingAndGlyphs">FUTURE TRENDS</text>
<text x="70.79" y="570.8" font-size="13.8" fill="#149b85" font-weight="bold" stroke="#149b85" stroke-width="0.2" textLength="70.68" lengthAdjust="spacingAndGlyphs">RESTRAINTS</text>
<text x="308.15" y="570" font-size="13.8" fill="#1a7a52" font-weight="bold" stroke="#1a7a52" stroke-width="0.2" textLength="76.64" lengthAdjust="spacingAndGlyphs">OPPORTUNITY</text>
<text x="59.14" y="469.9" font-size="11.3" fill="#fff" textLength="175.95" lengthAdjust="spacingAndGlyphs">Need for better intraoperative visibility</text>
<circle cx="44.2" cy="465.5" r="1.5" fill="#fff"/>
<text x="59.06" y="491" font-size="11.3" fill="#fff" textLength="170.46" lengthAdjust="spacingAndGlyphs">Increased complexity of laparoscopic</text>
<circle cx="44.2" cy="486.6" r="1.5" fill="#fff"/>
<text x="59.12" y="503.6" font-size="11.3" fill="#fff" textLength="55.11" lengthAdjust="spacingAndGlyphs">procedures</text>
<text x="59.17" y="524.6" font-size="11.3" fill="#fff" textLength="140.06" lengthAdjust="spacingAndGlyphs">Rising focus on surgical safety</text>
<circle cx="44.2" cy="520.2" r="1.5" fill="#fff"/>
<text x="295.97" y="476" font-size="11.3" fill="#fff" textLength="161.05" lengthAdjust="spacingAndGlyphs">Incorporation of smoke evacuation</text>
<circle cx="281" cy="471.6" r="1.5" fill="#fff"/>
<text x="296.90" y="488.9" font-size="11.3" fill="#fff" textLength="38.45" lengthAdjust="spacingAndGlyphs">function</text>
<text x="60.47" y="598.9" font-size="11.3" fill="#fff" textLength="165.97" lengthAdjust="spacingAndGlyphs">High cost of equipment and training</text>
<circle cx="45" cy="594.5" r="1.5" fill="#fff"/>
<text x="297.83" y="598.9" font-size="11.3" fill="#fff" textLength="161.64" lengthAdjust="spacingAndGlyphs">demand for multifunctional suction</text>
<circle cx="281.8" cy="594.5" r="1.5" fill="#fff"/>
<text x="297.83" y="611.8" font-size="11.3" fill="#fff" textLength="36.65" lengthAdjust="spacingAndGlyphs">devices</text>
<g fill="none" stroke="#2bc391" stroke-width="1" stroke-linejoin="round" stroke-linecap="round"><path d="M33.2 449.9H53.8" stroke-width="1.4"/><path d="M34.6 449.5V444.4H38.0V449.5"/><path d="M39.2 449.5V442.5H42.7V449.5"/><path d="M44.2 449.5V440.1H47.7V449.5"/><path d="M48.8 449.5V438.4H52.8V449.5"/><path d="M34.5 440L37.9 440.8L43 435.2L46.9 436.1L52.3 430.8" stroke-width="1.3"/><path d="M48.4 430.3H52.9V434.6" stroke-width="1.3"/></g>
<g fill="none" stroke="#1593ab" stroke-width="0.9" stroke-linejoin="round" stroke-linecap="round"><ellipse cx="275" cy="434.2" rx="2.6" ry="2.4" stroke-width="1"/><path d="M276.5 434.3H281.5M279.5 434.3V436.1M281.3 434.3V435.6" stroke-width="1"/><path d="M273.3 443.6L277.4 438.7L281.7 441.5L290.3 431.8"/><path d="M287.8 431.3L290.9 431.1L290.7 434.3Z" fill="#1593ab"/><rect x="272.3" y="447.1" width="2.4" height="4.6"/><rect x="277" y="443.2" width="1.9" height="8.5" fill="#1593ab"/><rect x="281.3" y="445" width="2.4" height="6.7"/></g><g fill="#1593ab"><rect x="286.0" y="441.7" width="1.3" height="1.3"/><rect x="286.0" y="444.9" width="1.3" height="1.3"/><rect x="286.0" y="447.79999999999995" width="1.3" height="1.3"/><rect x="286.0" y="450.4" width="1.3" height="1.3"/><rect x="288.0" y="441.7" width="1.3" height="1.3"/><rect x="288.0" y="444.9" width="1.3" height="1.3"/><rect x="288.0" y="447.79999999999995" width="1.3" height="1.3"/><rect x="288.0" y="450.4" width="1.3" height="1.3"/><rect x="290.0" y="436.7" width="1.3" height="1.5"/><rect x="290.0" y="439.3" width="1.3" height="1.5"/><rect x="290.0" y="442.3" width="1.3" height="1.5"/><rect x="290.0" y="444.8" width="1.3" height="1.5"/><rect x="290.0" y="447.7" width="1.3" height="1.5"/><rect x="290.0" y="450.3" width="1.3" height="1.5"/><rect x="292.0" y="436.7" width="1.3" height="1.5"/><rect x="292.0" y="439.3" width="1.3" height="1.5"/><rect x="292.0" y="442.3" width="1.3" height="1.5"/><rect x="292.0" y="444.8" width="1.3" height="1.5"/><rect x="292.0" y="447.7" width="1.3" height="1.5"/><rect x="292.0" y="450.3" width="1.3" height="1.5"/></g>
<g fill="none" stroke="#149b85" stroke-width="1.6" stroke-linecap="round" stroke-linejoin="round"><path d="M32.8 558.0V554.0Q32.8 551.8 35.0 551.8H39.0"/><path d="M48.199999999999996 551.8H52.199999999999996Q54.4 551.8 54.4 554.0V558.0"/><path d="M32.8 566.0999999999999V570.0999999999999Q32.8 572.3 35.0 572.3H39.0"/><path d="M48.199999999999996 572.3H52.199999999999996Q54.4 572.3 54.4 570.0999999999999V566.0999999999999"/><rect x="36" y="560" width="9.2" height="5" rx="2.5"/><path d="M42 562.5A2.5 2.5 0 0 1 44.5 560H45.5" stroke="#f2f2f2" stroke-width="3.6" stroke-linecap="butt"/><rect x="42" y="560" width="9.2" height="5" rx="2.5"/><path d="M45.2 562.5A2.5 2.5 0 0 1 42.7 565H41.7" stroke="#f2f2f2" stroke-width="3.6" stroke-linecap="butt"/><path d="M45.2 562.3A2.5 2.5 0 0 1 42.7 565H41"/><path d="M39.8 555.4L40.7 557.3M43.5 554.3V556.7M47.1 555.4L46.2 557.3M39.8 569L40.7 567.2M43.5 570V567.6M47.1 569L46.2 567.2" stroke-width="1.2"/></g>
<g fill="none" stroke="#1f7d58" stroke-width="0.95" stroke-linejoin="round" stroke-linecap="round"><path d="M276.9 553.8 L277.2 551.7 L280.4 551.7 L280.7 553.8 L282.8 554.7 L284.4 553.4 L286.7 555.7 L285.4 557.3 L286.3 559.4 L288.4 559.7 L288.4 562.9 L286.3 563.2 L285.4 565.3 L286.7 566.9 L284.4 569.2 L282.8 567.9 L280.7 568.8 L280.4 570.9 L277.2 570.9 L276.9 568.8 L274.8 567.9 L273.2 569.2 L270.9 566.9 L272.2 565.3 L271.3 563.2 L269.2 562.9 L269.2 559.7 L271.3 559.4 L272.2 557.3 L270.9 555.7 L273.2 553.4 L274.8 554.7Z"/><circle cx="278.8" cy="561.3" r="5.9"/><circle cx="278.8" cy="561.3" r="3.1"/><circle cx="285" cy="555.1" r="3.3" fill="#f2f2f2" stroke="none"/><path d="M278.40000000000003 561.6999999999999L284 556"/><path d="M283.4 556.6V553.3L287.2 549.4L290.8 553L287 556.6Z" fill="#f2f2f2"/><path d="M284.6 555.4L288.6 551.4M286.2 556.2L289.8 552.4" stroke-width="0.8"/></g>
</svg></body></html>
